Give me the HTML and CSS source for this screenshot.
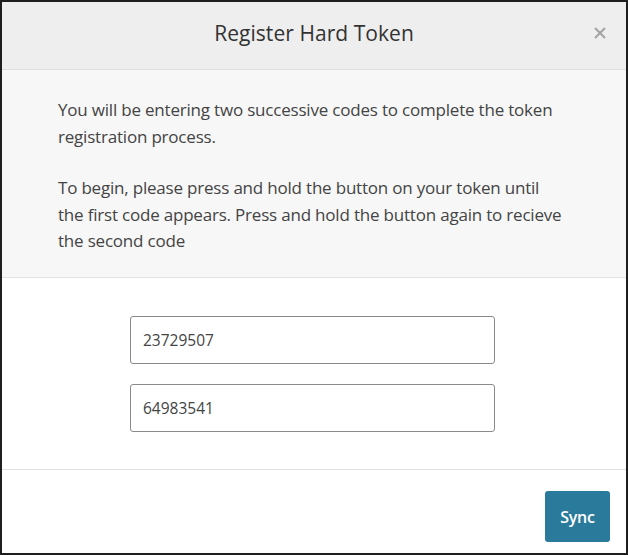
FILE: index.html
```html
<!DOCTYPE html>
<html>
<head>
<meta charset="utf-8">
<link rel="stylesheet" href="styles.css">
</head>
<body>
<div class="modal">
  <div class="modal-header">
    <h1 class="title">Register Hard Token</h1>
    <span class="close"><svg width="14" height="14" viewBox="0 0 14 14"><path d="M2 2 L12 12 M12 2 L2 12" stroke="#a3a3a3" stroke-width="2" fill="none"/></svg></span>
  </div>
  <div class="intro">
    <p>You will be entering two successive codes to complete the token registration process.</p>
    <p>To begin, please press and hold the button on your token until the first code appears. Press and hold the button again to recieve the second code</p>
  </div>
  <div class="codes">
    <input class="code" type="text" value="23729507">
    <input class="code" type="text" value="64983541">
  </div>
  <div class="modal-footer">
    <button class="sync">Sync</button>
  </div>
</div>
</body>
</html>
```
FILE: styles.css
```css
html, body {
  margin: 0;
  padding: 0;
  background: #ffffff;
}
.modal {
  width: 628px;
  height: 555px;
  box-sizing: border-box;
  border: 2px solid #1e1e1e;
  display: flex;
  flex-direction: column;
  font-family: "Open Sans", "Noto Sans", sans-serif;
  color: #444;
}
.modal-header {
  height: 68px;
  box-sizing: border-box;
  padding-bottom: 5px;
  background: #eeeeee;
  border-bottom: 1px solid #dedede;
  position: relative;
  display: flex;
  align-items: center;
  justify-content: center;
}
.title {
  margin: 0;
  font-size: 21px;
  font-weight: 400;
  color: #333;
  letter-spacing: 0.05px;
}
.close {
  position: absolute;
  right: 19px;
  top: 24px;
  display: flex;
}
.intro {
  background: #f7f7f7;
  border-bottom: 1px solid #e2e2e2;
  padding: 27px 60px 25px 56px;
  height: 208px;
  box-sizing: border-box;
}
.intro p {
  margin: 0 0 25px 0;
  font-size: 17px;
  line-height: 26.5px;
  letter-spacing: -0.2px;
}
.intro p:last-child {
  margin-bottom: 0;
}
.codes {
  height: 192px;
  box-sizing: border-box;
  border-bottom: 1px solid #e2e2e2;
  display: flex;
  flex-direction: column;
  align-items: center;
  padding-top: 38px;
  gap: 20px;
}
.code {
  width: 365px;
  height: 48px;
  box-sizing: border-box;
  border: 1px solid #8a8a8a;
  border-radius: 3px;
  padding: 0 12px;
  font-family: "Open Sans", "Noto Sans", sans-serif;
  font-size: 15.5px;
  color: #444;
  background: #fff;
  margin-right: 3px;
}
.modal-footer {
  flex: 1;
  display: flex;
  justify-content: flex-end;
  align-items: flex-start;
  padding: 21px 16px 0 0;
}
.sync {
  width: 65px;
  height: 51px;
  border: none;
  border-radius: 3px;
  background: #2a7a9c;
  color: #fff;
  font-family: "Open Sans", "Noto Sans", sans-serif;
  font-size: 16px;
  font-weight: 600;
  letter-spacing: -0.3px;
}
```
